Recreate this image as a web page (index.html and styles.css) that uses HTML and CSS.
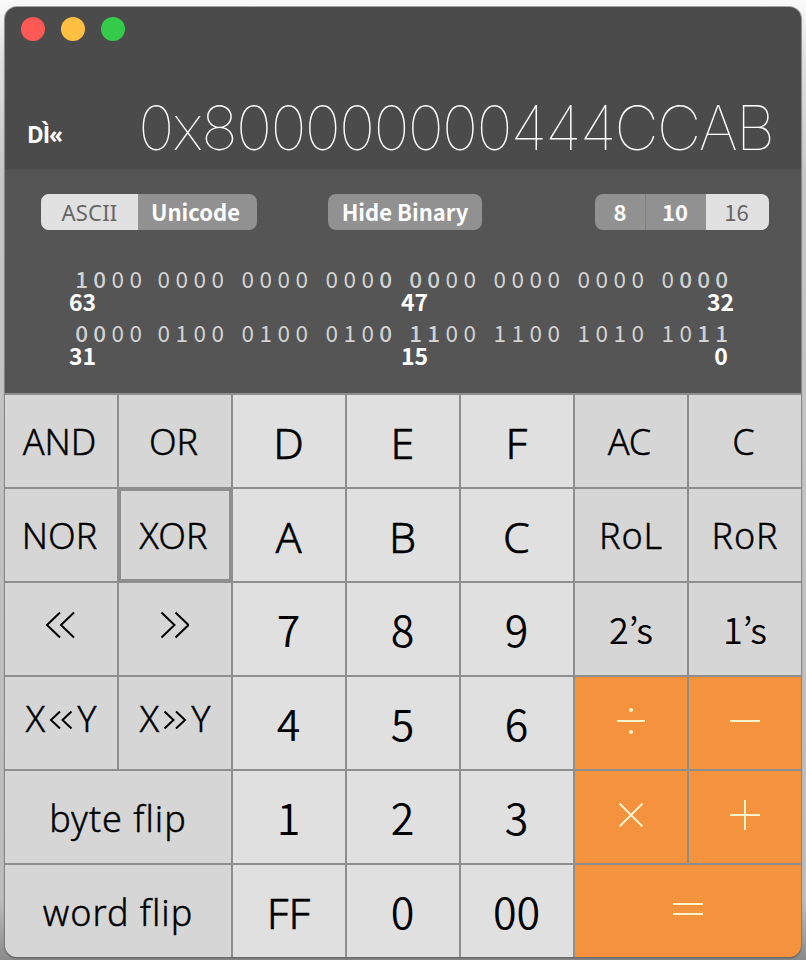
FILE: index.html
```html
<!DOCTYPE html>
<html lang="en">
<head>
<meta charset="utf-8">
<title>Calculator</title>
<link rel="stylesheet" href="styles.css">
</head>
<body>
<main class="window">
  <header class="display">
    <div class="lights"><i class="red"></i><i class="yellow"></i><i class="green"></i></div>
    <div class="readout"><span class="chars">DÌ«</span><span class="value">0x800000000444CCAB</span></div>
  </header>
  <section class="panel">
    <div class="controls">
      <div class="segment encoding"><span class="on">ASCII</span><span>Unicode</span></div>
      <div class="segment toggle"><span>Hide Binary</span></div>
      <div class="segment base"><span>8</span><span>10</span><span class="on">16</span></div>
    </div>
    <div class="bits">
      <p><b>1</b><b>0</b><i>0</i><i>0</i></p><p><i>0</i><i>0</i><i>0</i><i>0</i></p><p><i>0</i><i>0</i><i>0</i><i>0</i></p><p><i>0</i><i>0</i><i>0</i><b>0</b></p><p><b>0</b><b>0</b><i>0</i><i>0</i></p><p><i>0</i><i>0</i><i>0</i><i>0</i></p><p><i>0</i><i>0</i><i>0</i><i>0</i></p><p><i>0</i><b>0</b><b>0</b><b>0</b></p>
    </div>
    <div class="marks"><span>63</span><span>47</span><span>32</span></div>
    <div class="bits">
      <p><b>0</b><b>0</b><i>0</i><i>0</i></p><p><i>0</i><i>1</i><i>0</i><i>0</i></p><p><i>0</i><i>1</i><i>0</i><i>0</i></p><p><i>0</i><i>1</i><i>0</i><b>0</b></p><p><b>1</b><b>1</b><i>0</i><i>0</i></p><p><i>1</i><i>1</i><i>0</i><i>0</i></p><p><i>1</i><i>0</i><i>1</i><i>0</i></p><p><i>1</i><i>0</i><b>1</b><b>1</b></p>
    </div>
    <div class="marks"><span>31</span><span>15</span><span class="zero">0</span></div>
  </section>
  <section class="keys">
    <button>AND</button><button>OR</button><button class="hex">D</button><button class="hex">E</button><button class="hex">F</button><button>AC</button><button>C</button>
    <button>NOR</button><button class="focus">XOR</button><button class="hex">A</button><button class="hex">B</button><button class="hex">C</button><button class="ro">RoL</button><button class="ro">RoR</button>
    <button class="icon"><svg width="30" height="28"><path d="M15 1.500 2 14l13 12.500M29 1.500 16 14l13 12.500"/></svg></button>
    <button class="icon"><svg width="30" height="28"><path d="M2.500 1.500 15.500 14l-13 12.500M16.500 1.500 29.500 14l-13 12.500"/></svg></button>
    <button class="num">7</button><button class="num">8</button><button class="num">9</button><button class="comp">2’s</button><button class="comp">1’s</button>
    <button class="shift">X<svg width="24" height="20"><path d="M11 1.500 2 10l9 8.500M22.500 1.500 13.500 10l9 8.500"/></svg>Y</button>
    <button class="shift">X<svg width="24" height="20"><path d="M1.500 1.500 10.500 10l-9 8.500M13 1.500 22 10l-9 8.500"/></svg>Y</button>
    <button class="num">4</button><button class="num">5</button><button class="num">6</button>
    <button class="op"><svg width="32" height="32"><path d="M2 16h28"/><circle cx="16" cy="5" r="2"/><circle cx="16" cy="27" r="2"/></svg></button>
    <button class="op"><svg width="32" height="32"><path d="M1 16h30"/></svg></button>
    <button class="wide">byte flip</button><button class="num">1</button><button class="num">2</button><button class="num">3</button>
    <button class="op"><svg width="32" height="32"><path d="M4.500 4.500l23 23M27.500 4.500l-23 23"/></svg></button>
    <button class="op"><svg width="32" height="32"><path d="M1 16h30M16 1v30"/></svg></button>
    <button class="wide">word flip</button><button class="hex">FF</button><button class="num">0</button><button class="num">00</button>
    <button class="op equals"><svg width="32" height="32"><path d="M1 11h30M1 21h30"/></svg></button>
  </section>
</main>
</body>
</html>
```
FILE: styles.css
```css
* { box-sizing: border-box; }
body {
  margin: 0;
  height: 960px;
  padding: 7px 5px 3px;
  overflow: hidden;
  background: linear-gradient(#fafafa, #e0e0e0 60px, #c6c6c6 180px, #bcbcbc 900px, #8a8a8a);
  font-family: "Noto Sans", sans-serif;
}
.window {
  width: 796px;
  height: 950px;
  border-radius: 12px;
  overflow: hidden;
  background: #8e8e8e;
  box-shadow: 0 0 0 1px #77777799, 0 1px 2px #444;
}
.display { height: 162px; background: #4b4b4b; color: #fff; }
.lights { display: flex; gap: 16px; padding: 10px 16px 0; }
.lights i { width: 24px; height: 24px; border-radius: 50%; }
.red { background: #ff5855; }
.yellow { background: #ffbf43; }
.green { background: #34cb4b; }
.readout { display: flex; justify-content: space-between; align-items: flex-start; padding: 49px 27.700px 0 22px; }
.chars { margin-top: 29px; font: 700 22.500px/31px "Open Sans", sans-serif; letter-spacing: -1px; }
.value { font: 100 61px/76px Inter, sans-serif; letter-spacing: -1.700px; white-space: nowrap; }
.panel { height: 224px; padding: 24px 32px 0 36px; background: #555; border-top: 1px solid #525252; }
.controls { display: flex; justify-content: space-between; height: 36px; }
.segment { display: flex; border-radius: 8px; overflow: hidden; background: #919191; color: #fff; font: 700 22px/36px "Noto Sans CJK JP", sans-serif; }
.segment span { text-align: center; white-space: nowrap; }
.segment .on { background: #e1e1e1; color: #666; font-weight: 400; }
.encoding, .toggle { line-height: 34px; }
.encoding .on { font-family: "Noto Sans", sans-serif; line-height: 36px; letter-spacing: 0.200px; }
.encoding span { width: 97px; }
.encoding span + span { width: 119px; padding-right: 4px; }
.toggle { margin-right: 42px; }
.toggle span { width: 154px; }
.base span { width: 50px; line-height: 34px; }
.base span + span { width: 61px; border-left: 1px solid #808080; padding-right: 2px; }
.base span + .on { width: 63px; border: 0; }
.bits { display: flex; gap: 12px; margin: 37px 0 0 29.700px; height: 23px; color: #d2d2d2; font: 400 22.500px/23px "Noto Sans CJK JP", sans-serif; }
.bits p { display: flex; margin: 0; }
.bits p:first-child { position: relative; left: 2px; }
.bits p > * { width: 18px; text-align: center; font-style: normal; }
.bits b { font-weight: 500; }
.marks { display: grid; grid-template-columns: 332px 306px 28px; height: 24px; margin-left: 28px; color: #fff; font: 700 23px/23px "Noto Sans CJK JP", sans-serif; }
.marks .zero { text-align: center; }
.marks + .bits { margin-top: 7px; }
.keys { display: grid; grid-template-columns: repeat(7, 112px); grid-auto-rows: 92px; gap: 2px; padding-top: 2px; }
button {
  display: flex; align-items: center; justify-content: center;
  border: 0; margin: 0; padding: 2px 3px 0 0;
  background: #d6d6d6; color: #000;
  font: 300 36px/1 "Noto Sans", sans-serif; white-space: pre;
  -webkit-text-stroke: 0.400px #000;
}
.hex { background: #e0e0e0; font-size: 43px; padding: 2px 1px 0 0; -webkit-text-stroke-width: 0.600px; }
.num { background: #e0e0e0; font-family: "Noto Sans CJK JP", sans-serif; font-size: 43px; font-weight: 350; padding: 0 1px 2px 0; -webkit-text-stroke-width: 0; }
.focus { box-shadow: inset 0 0 0 2px #8e8e8e; }
.ro { padding: 2px 0 0; letter-spacing: 0.800px; }
.comp { font-family: "Noto Sans CJK JP", sans-serif; font-weight: 350; padding: 0 0 3px; -webkit-text-stroke-width: 0; }
.wide, .equals { grid-column: span 2; }
.wide { padding: 3px 0 0; letter-spacing: 1px; }
.op { background: #f5923e; }
svg { fill: none; stroke: #000; stroke-width: 2; flex: none; }
.icon { padding: 0 2px 8px 0; }
.shift { gap: 4px; padding: 0 0 8px 0; }
.shift svg { margin-top: 2px; }
.op { padding: 0 0 4px; }
.op svg { stroke: #fff3cc; }
.op circle { fill: #fff3cc; stroke: none; }
```
